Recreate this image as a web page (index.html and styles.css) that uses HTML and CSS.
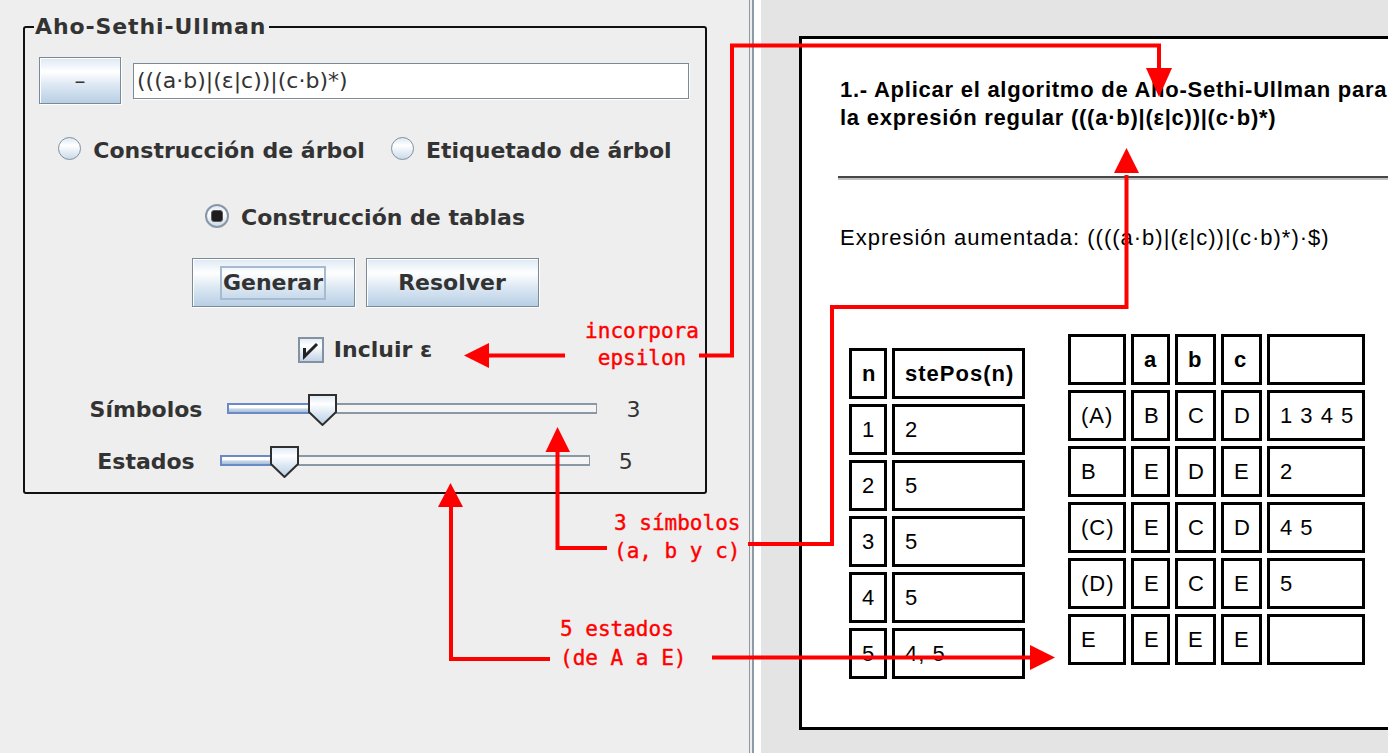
FILE: index.html
```html
<!DOCTYPE html>
<html>
<head>
    <title>Aho-Sethi-Ullman</title>
    <link rel="stylesheet" href="styles.css">
</head>
<body>
    <div class="app">
        <!-- Left: control panel -->
        <div class="left-pane">
            <fieldset class="panel">
                <legend>Aho-Sethi-Ullman</legend>

                <div class="row expr-row">
                    <button class="btn btn-minus">–</button>
                    <div class="text-field">(((a·b)|(ε|c))|(c·b)*)</div>
                </div>

                <div class="row radio-row">
                    <label class="option"><span class="radio"></span>Construcción de árbol</label>
                    <label class="option"><span class="radio"></span>Etiquetado de árbol</label>
                </div>

                <div class="row radio-row2">
                    <label class="option"><span class="radio checked"></span>Construcción de tablas</label>
                </div>

                <div class="row buttons-row">
                    <button class="btn btn-generate"><span class="focus">Generar</span></button>
                    <button class="btn btn-solve">Resolver</button>
                </div>

                <div class="row check-row">
                    <label class="option check-option">
                        <span class="checkbox">
                            <svg width="22" height="22" viewBox="0 0 22 22"><path d="M4.5 9V17.5L17 5" fill="none" stroke="#222" stroke-width="3"/></svg>
                        </span>Incluir ε
                    </label>
                </div>

                <div class="row slider-row">
                    <span class="slider-label">Símbolos</span>
                    <div class="slider">
                        <div class="track"><div class="fill" style="width: 95px"></div></div>
                        <svg class="thumb" style="left: 81px" width="29" height="32" viewBox="0 0 29 32">
                            <defs>
                                <linearGradient id="thumbA" x1="0" y1="0" x2="0" y2="1">
                                    <stop offset="0" stop-color="#dde8f3"/>
                                    <stop offset=".3" stop-color="#ffffff"/>
                                    <stop offset=".6" stop-color="#dde8f3"/>
                                    <stop offset="1" stop-color="#b8cfe5"/>
                                </linearGradient>
                            </defs>
                            <path d="M1 1H28V18L14.5 31L1 18Z" fill="url(#thumbA)" stroke="#2f2f2f" stroke-width="2"/>
                        </svg>
                    </div>
                    <span class="slider-value">3</span>
                </div>

                <div class="row slider-row slider-row2">
                    <span class="slider-label">Estados</span>
                    <div class="slider">
                        <div class="track"><div class="fill" style="width: 64px"></div></div>
                        <svg class="thumb" style="left: 50px" width="29" height="32" viewBox="0 0 29 32">
                            <defs>
                                <linearGradient id="thumbB" x1="0" y1="0" x2="0" y2="1">
                                    <stop offset="0" stop-color="#dde8f3"/>
                                    <stop offset=".3" stop-color="#ffffff"/>
                                    <stop offset=".6" stop-color="#dde8f3"/>
                                    <stop offset="1" stop-color="#b8cfe5"/>
                                </linearGradient>
                            </defs>
                            <path d="M1 1H28V18L14.5 31L1 18Z" fill="url(#thumbB)" stroke="#2f2f2f" stroke-width="2"/>
                        </svg>
                    </div>
                    <span class="slider-value">5</span>
                </div>
            </fieldset>
        </div>

        <div class="divider"></div>

        <!-- Right: generated exercise sheet -->
        <div class="viewer">
            <div class="sheet">
                <h2 class="question">1.- Aplicar el algoritmo de Aho-Sethi-Ullman para<br>la expresión regular (((a·b)|(ε|c))|(c·b)*)</h2>
                <hr class="rule">
                <p class="augmented">Expresión aumentada: ((((a·b)|(ε|c))|(c·b)*)·$)</p>

                <div class="tables">
                    <table class="grid follow">
                        <tr><th class="c-n">n</th><th class="c-pos">stePos(n)</th></tr>
                        <tr><td>1</td><td>2</td></tr>
                        <tr><td>2</td><td>5</td></tr>
                        <tr><td>3</td><td>5</td></tr>
                        <tr><td>4</td><td>5</td></tr>
                        <tr><td>5</td><td>4, 5</td></tr>
                    </table>

                    <table class="grid states">
                        <tr><th class="c-st"></th><th class="c-a">a</th><th class="c-b">b</th><th class="c-c">c</th><th class="c-set"></th></tr>
                        <tr><td>(A)</td><td>B</td><td>C</td><td>D</td><td>1 3 4 5</td></tr>
                        <tr><td>B</td><td>E</td><td>D</td><td>E</td><td>2</td></tr>
                        <tr><td>(C)</td><td>E</td><td>C</td><td>D</td><td>4 5</td></tr>
                        <tr><td>(D)</td><td>E</td><td>C</td><td>E</td><td>5</td></tr>
                        <tr><td>E</td><td>E</td><td>E</td><td>E</td><td></td></tr>
                    </table>
                </div>
            </div>
        </div>
    </div>

    <!-- Red annotations drawn over the screenshot -->
    <svg class="notes" width="1388" height="753" viewBox="0 0 1388 753">
        <g fill="none" stroke="#ff0000" stroke-width="4">
            <polyline points="699,355.5 732,355.5 732,45.5 1159,45.5 1159,72"/>
            <polyline points="565,355.5 486,355.5"/>
            <polyline points="607,548 557.5,548 557.5,450"/>
            <polyline points="748,544 832,544 832,307 1126.5,307 1126.5,175"/>
            <polyline points="550,659 451,659 451,505"/>
            <polyline points="712,657.5 1032,657.5"/>
        </g>
        <g fill="#ff0000">
            <polygon points="1146,68 1172,68 1159,97"/>
            <polygon points="489,343 489,368 464,355.5"/>
            <polygon points="545.5,452 570,452 557.5,427"/>
            <polygon points="1114,173 1139,173 1126.5,148"/>
            <polygon points="438,507 463,507 450.5,483"/>
            <polygon points="1030,645 1030,670 1055,657.5"/>
        </g>
        <g class="note-text">
            <text x="642" y="338" text-anchor="middle">incorpora</text>
            <text x="642" y="365" text-anchor="middle">epsilon</text>
            <text x="614" y="530">3 símbolos</text>
            <text x="614" y="558">(a, b y c)</text>
            <text x="560" y="636">5 estados</text>
            <text x="560" y="665">(de A a E)</text>
        </g>
    </svg>
</body>
</html>
```

FILE: styles.css
```css
body {
    margin: 0;
    padding: 0;
    position: relative;
    overflow: hidden;
    font-family: "DejaVu Sans", sans-serif;
    color: #333333;
}

.app {
    display: flex;
    height: 753px;
}

/* ---------- left pane ---------- */

.left-pane {
    width: 749px;
    box-sizing: border-box;
    background-color: #eeeeee;
    padding: 14px 0 0 23px;
}

.panel {
    width: 684px;
    box-sizing: border-box;
    margin: 0;
    padding: 0 0 14px 0;
    border: 2px solid #111111;
    border-radius: 3px;
}

.panel legend {
    margin-left: 9px;
    padding: 0 3px 0 1px;
    font-size: 22px;
    line-height: 26px;
    font-weight: bold;
    letter-spacing: 0.9px;
}

.row {
    display: flex;
    align-items: center;
    justify-content: center;
    font-size: 22px;
    line-height: 26px;
    font-weight: bold;
}

.expr-row {
    justify-content: flex-start;
    margin-top: 17px;
    padding-left: 14px;
    gap: 12px;
}

.radio-row {
    margin-top: 33px;
    gap: 26px;
}

.radio-row2 {
    margin-top: 39px;
}

.buttons-row {
    margin-top: 27px;
    gap: 11px;
}

.check-row {
    margin-top: 30px;
}

.slider-row {
    margin-top: 31px;
    gap: 25px;
}

.slider-row2 {
    margin-top: 20px;
}

/* buttons, metal "ocean" look */
.btn {
    font: inherit;
    color: #333333;
    padding: 0;
    border: 1px solid #7a8a99;
    background: linear-gradient(#dde8f3 0%, #ffffff 30%, #dde8f3 60%, #b8cfe5 100%);
    box-shadow: 1px 1px 0 #ffffff, inset 1px 1px 0 #ffffff;
    display: flex;
    align-items: center;
    justify-content: center;
}

.btn-minus {
    width: 82px;
    height: 47px;
    font-weight: normal;
}

.btn-generate {
    width: 163px;
    height: 49px;
}

.btn-solve {
    width: 173px;
    height: 49px;
}

.focus {
    border: 2px solid #a6bbcf;
    padding: 2px 1px;
}

.text-field {
    width: 556px;
    height: 36px;
    box-sizing: border-box;
    background-color: #ffffff;
    border: 1px solid #7a8a99;
    box-shadow: 1px 1px 0 #ffffff;
    padding-left: 3px;
    font-weight: normal;
    font-size: 22px;
    line-height: 33px;
    white-space: nowrap;
}

.option {
    display: flex;
    align-items: center;
    gap: 12px;
}

.radio {
    width: 23px;
    height: 23px;
    box-sizing: border-box;
    border-radius: 50%;
    border: 1px solid #7f90a1;
    background: linear-gradient(#dde8f3 0%, #ffffff 35%, #cbdae8 100%);
    margin-bottom: 5px;
    display: flex;
    align-items: center;
    justify-content: center;
}

.radio.checked {
    width: 24px;
    height: 24px;
    margin-bottom: 3px;
    border: 2px solid #8797a8;
}

.radio.checked::after {
    content: "";
    width: 10px;
    height: 10px;
    border-radius: 3px;
    background-color: #1e1e1e;
    border: 1px solid #5a5a5a;
}

.check-option {
    gap: 10px;
}

.checkbox {
    width: 26px;
    height: 26px;
    box-sizing: border-box;
    border: 2px solid #8292a3;
    background: linear-gradient(#e6edf5 0%, #ffffff 30%, #c3d4e6 100%);
    display: flex;
}

/* sliders */
.slider-label {
    white-space: nowrap;
}

.slider {
    position: relative;
    width: 370px;
    height: 32px;
}

.track {
    position: relative;
    margin-top: 9px;
    height: 11px;
    box-sizing: border-box;
    border: 2px solid #8a97a4;
    border-left: none;
    border-right-width: 1px;
    background-color: #f4f4f4;
}

.fill {
    position: absolute;
    top: -2px;
    bottom: -2px;
    left: 0;
    box-sizing: border-box;
    border: 2px solid #6a8ac6;
    border-right: none;
    background: linear-gradient(#ffffff 0%, #ffffff 35%, #c6d6e8 60%, #a9bfd8 100%);
}

.thumb {
    position: absolute;
    top: 0;
}

.slider-value {
    font-weight: normal;
    padding-left: 4px;
}

/* divider between panes */
.divider {
    width: 12px;
    background: linear-gradient(to right, #8d9aa7 0 1px, #eeeeee 1px 3px, #8d9aa7 3px 5px, #ffffff 5px 12px);
}

/* ---------- right pane ---------- */

.viewer {
    flex: 1;
    min-width: 0;
    overflow: hidden;
    background-color: #e4e4e4;
    padding: 36px 0 0 38px;
}

.sheet {
    width: 820px;
    height: 694px;
    box-sizing: border-box;
    border: 3px solid #000000;
    background-color: #ffffff;
    padding: 37px 0 0 38px;
    font-family: "Liberation Sans", Arial, sans-serif;
    color: #000000;
}

.question {
    margin: 0;
    font-size: 22px;
    line-height: 28px;
    font-weight: bold;
    letter-spacing: 0.75px;
    white-space: nowrap;
}

.rule {
    height: 0;
    margin: 44px 0 0 -2px;
    border: none;
    border-top: 2px solid #474747;
    border-bottom: 2px solid #c2c2c2;
}

.augmented {
    margin: 44px 0 0 0;
    font-size: 22px;
    line-height: 28px;
    letter-spacing: 1px;
    white-space: nowrap;
}

.tables {
    display: flex;
    align-items: flex-start;
    margin-top: 77px;
}

.grid {
    border-collapse: separate;
    border-spacing: 5px;
    font-size: 22px;
    letter-spacing: 1px;
}

.grid th,
.grid td {
    box-sizing: border-box;
    height: 51px;
    border: 3px solid #000000;
    padding: 0 0 0 10px;
    text-align: left;
    vertical-align: middle;
    white-space: nowrap;
}

.grid th {
    font-weight: bold;
}

.follow {
    margin: 14px 0 0 4px;
}

.states {
    margin-left: 33px;
}

.c-n { width: 38px; }
.c-pos { width: 133px; }
.c-st { width: 58px; }
.c-a { width: 39px; }
.c-b { width: 41px; }
.c-c { width: 41px; }
.c-set { width: 98px; }

/* annotation overlay */
.notes {
    position: absolute;
    top: 0;
    left: 0;
    pointer-events: none;
}

.note-text text {
    font-family: "DejaVu Sans Mono", monospace;
    font-size: 21px;
    fill: #ff0000;
    stroke: #ff0000;
    stroke-width: 0.4px;
}
```
